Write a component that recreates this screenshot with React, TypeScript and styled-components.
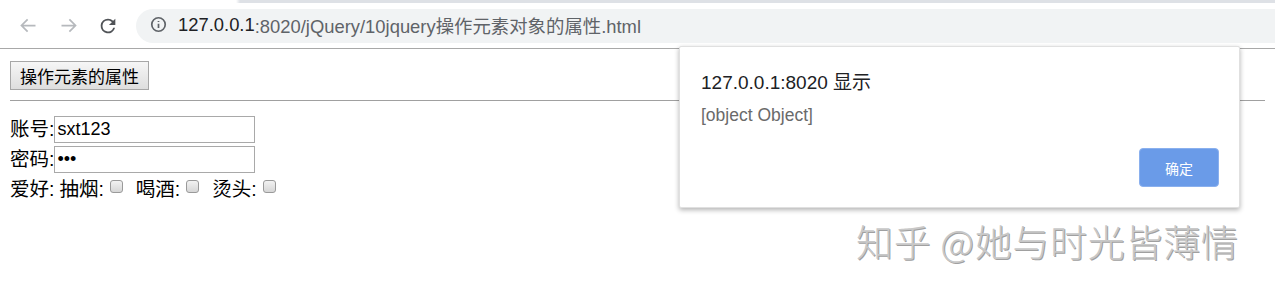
import React from "react";
import styled, { createGlobalStyle } from "styled-components";

const GlobalStyle = createGlobalStyle`
    html, body {
        margin: 0;
        padding: 0;
        background: #ffffff;
    }
    body {
        font-family: "Liberation Sans", Arial, "Noto Sans CJK SC", sans-serif;
        color: #000;
        overflow: hidden;
    }
`;

const Screen = styled.div`
    position: relative;
    width: 1275px;
    height: 292px;
    overflow: hidden;
`;

const TabStrip = styled.div`
    height: 3px;
    background: linear-gradient(to right, #ffffff 0, #ffffff 236px, #dee1e6 240px);
`;

const Toolbar = styled.div`
    display: flex;
    align-items: center;
    height: 45px;
    padding-left: 15px;
    border-bottom: 1px solid #a8a8a8;
    background: #ffffff;
`;

const NavButton = styled.div<{ $dim?: boolean }>`
    width: 26px;
    height: 26px;
    margin-right: 14px;
    display: flex;
    align-items: center;
    justify-content: center;
    color: ${p => (p.$dim ? "#b6b9bd" : "#505357")};
`;

const Omnibox = styled.div`
    flex: 1;
    display: flex;
    align-items: center;
    height: 34px;
    margin-left: 1px;
    padding-left: 14px;
    padding-bottom: 2px;
    box-sizing: border-box;
    border-radius: 17px 0 0 17px;
    background: #f1f3f4;
    font-size: 18.4px;
`;

const Host = styled.span`
    color: #202124;
    margin-left: 11px;
`;

const Path = styled.span`
    color: #5f6368;
`;

const Page = styled.div`
    padding: 12px 10px 0 10px;
    font-size: 19.5px;
`;

const ActionButton = styled.button`
    height: 29px;
    padding: 0 9px;
    font-family: "Liberation Sans", Arial, "Noto Sans CJK SC", sans-serif;
    font-size: 17px;
    color: #000;
    border: 1px solid #a7a7a7;
    border-radius: 0;
    background: linear-gradient(#f6f6f6, #dedede);
`;

const Rule = styled.hr`
    margin: 10px 0 13px 0;
    border: none;
    border-top: 1px solid #a0a0a0;
`;

const FieldRow = styled.div`
    display: flex;
    align-items: center;
    height: 30px;
    line-height: 30px;
`;

const TextInput = styled.input`
    box-sizing: border-box;
    width: 201px;
    height: 27px;
    margin: 0;
    padding: 0 2px;
    border: 1px solid #a9a9a9;
    font-family: "Liberation Sans", Arial, sans-serif;
    font-size: 18px;
    color: #000;
    outline: none;
`;

const CheckBox = styled.span`
    display: inline-block;
    box-sizing: border-box;
    width: 13px;
    height: 13px;
    margin: 0 8px 0 6px;
    border: 1px solid #9a9a9a;
    border-radius: 3px;
    background: linear-gradient(#f2f2f2, #d6d6d6);
    position: relative;
    top: -3px;
`;

const Gap = styled.span`
    display: inline-block;
    width: 5px;
`;

const Dialog = styled.div`
    position: absolute;
    left: 679px;
    top: 46px;
    width: 561px;
    height: 162px;
    box-sizing: border-box;
    padding: 20px 20px 0 21px;
    background: #ffffff;
    border: 1px solid #e0e0e0;
    border-radius: 2px;
    box-shadow: 0 2px 5px rgba(0, 0, 0, 0.3);
    display: flex;
    flex-direction: column;
`;

const DialogTitle = styled.div`
    font-size: 19px;
    color: #202124;
`;

const DialogMessage = styled.div`
    margin-top: 11px;
    font-size: 17.5px;
    color: #6a6a6a;
`;

const DialogFooter = styled.div`
    display: flex;
    justify-content: flex-end;
    margin-top: 22px;
`;

const OkButton = styled.button`
    width: 80px;
    height: 39px;
    border: 1px solid #8ab0ee;
    border-radius: 4px;
    background: #6a9be8;
    color: #ffffff;
    font-family: "Liberation Sans", Arial, "Noto Sans CJK SC", sans-serif;
    font-size: 14px;
`;

const Watermark = styled.div`
    position: absolute;
    left: 856px;
    top: 214px;
    font-family: "Noto Sans CJK SC", sans-serif;
    font-weight: 300;
    font-size: 37px;
    letter-spacing: 0.7px;
    color: #c8c8c8;
    text-shadow: 1px 1px 0 #a0a0a0;
`;

const BackIcon = () => (
    <svg width="21" height="21" viewBox="0 0 24 24" fill="none" stroke="currentColor" strokeWidth="2">
        <path d="M20 12H5M11 5l-7 7 7 7"/>
    </svg>
);

const ForwardIcon = () => (
    <svg width="21" height="21" viewBox="0 0 24 24" fill="none" stroke="currentColor" strokeWidth="2">
        <path d="M4 12h15M13 5l7 7-7 7"/>
    </svg>
);

const ReloadIcon = () => (
    <svg width="22" height="22" viewBox="0 0 24 24" fill="currentColor">
        <path d="M17.65 6.35A7.96 7.96 0 0 0 12 4a8 8 0 1 0 7.73 10h-2.08A6 6 0 1 1 12 6c1.66 0 3.14.69 4.22 1.78L13 11h7V4l-2.35 2.35z"/>
    </svg>
);

const InfoIcon = () => (
    <svg width="17" height="17" viewBox="0 0 24 24" fill="none" stroke="#5f6368" strokeWidth="2.4">
        <circle cx="12" cy="12" r="9.5"/>
        <path d="M12 11v6M12 7v1.5"/>
    </svg>
);

export default function App() {
    return (
        <Screen>
            <GlobalStyle/>
            <TabStrip/>
            <Toolbar>
                <NavButton $dim><BackIcon/></NavButton>
                <NavButton $dim><ForwardIcon/></NavButton>
                <NavButton><ReloadIcon/></NavButton>
                <Omnibox>
                    <InfoIcon/>
                    <Host>127.0.0.1</Host>
                    <Path>:8020/jQuery/10jquery操作元素对象的属性.html</Path>
                </Omnibox>
            </Toolbar>
            <Page>
                <ActionButton>操作元素的属性</ActionButton>
                <Rule/>
                <FieldRow>账号:<TextInput defaultValue="sxt123"/></FieldRow>
                <FieldRow>密码:<TextInput type="password" defaultValue="123"/></FieldRow>
                <FieldRow>
                    爱好:<Gap/>抽烟:<CheckBox/><Gap/>喝酒:<CheckBox/><Gap/>烫头:<CheckBox/>
                </FieldRow>
            </Page>
            <Dialog>
                <DialogTitle>127.0.0.1:8020 显示</DialogTitle>
                <DialogMessage>[object Object]</DialogMessage>
                <DialogFooter>
                    <OkButton>确定</OkButton>
                </DialogFooter>
            </Dialog>
            <Watermark>知乎 @她与时光皆薄情</Watermark>
        </Screen>
    );
}
